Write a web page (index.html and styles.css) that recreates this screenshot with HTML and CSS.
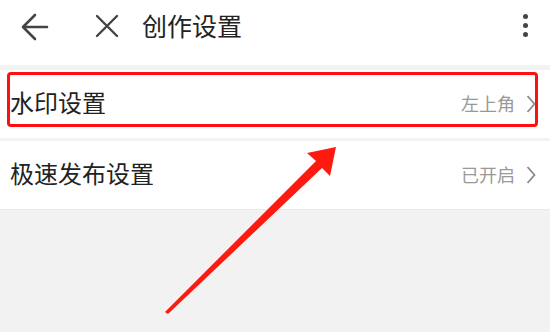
FILE: index.html
```html
<!DOCTYPE html>
<html lang="zh">
<head>
<meta charset="utf-8">
<link rel="stylesheet" href="styles.css">
</head>
<body>
<div class="page">
  <header class="topbar">
    <svg class="icon back" width="30" height="30" viewBox="0 0 30 30"><path d="M27 15H4M15 3L3 15L15 27" fill="none" stroke="#444" stroke-width="2.6" stroke-linecap="round" stroke-linejoin="round"/></svg>
    <svg class="icon close" width="26" height="26" viewBox="0 0 26 26"><path d="M3 3L23 23M23 3L3 23" fill="none" stroke="#444" stroke-width="2.4" stroke-linecap="round"/></svg>
    <h1 class="title">创作设置</h1>
    <div class="more"><span></span><span></span><span></span></div>
  </header>
  <div class="sep sep-top"></div>
  <div class="row">
    <span class="label">水印设置</span>
    <span class="value">左上角</span>
    <svg class="chev" width="10" height="20" viewBox="0 0 10 20"><path d="M1.5 2L8.5 10L1.5 18" fill="none" stroke="#8a8a8a" stroke-width="1.8"/></svg>
  </div>
  <div class="sep sep-mid"></div>
  <div class="row">
    <span class="label">极速发布设置</span>
    <span class="value">已开启</span>
    <svg class="chev" width="10" height="20" viewBox="0 0 10 20"><path d="M1.5 2L8.5 10L1.5 18" fill="none" stroke="#8a8a8a" stroke-width="1.8"/></svg>
  </div>
  <div class="rest"></div>
  <div class="highlight"></div>
  <svg class="arrow" width="550" height="332" viewBox="0 0 550 332"><path d="M165 312L168 314L322 168L330 176L336 147L307 153L316 161Z" fill="#ff1a0f"/></svg>
</div>
</body>
</html>
```
FILE: styles.css
```css
html, body {
  margin: 0;
  padding: 0;
}
body {
  width: 550px;
  height: 332px;
  overflow: hidden;
  background: #f2f2f2;
  font-family: "Noto Sans CJK SC", "Noto Sans", sans-serif;
}
.page {
  position: relative;
  width: 550px;
  height: 332px;
  display: flex;
  flex-direction: column;
}
.topbar {
  height: 52px;
  padding-bottom: 13px;
  background: #fff;
  display: flex;
  align-items: center;
  flex-shrink: 0;
}
.back {
  margin-left: 20px;
  margin-top: 2px;
}
.close {
  margin-left: 44px;
}
.title {
  margin: -3px 0 0 22px;
  font-size: 25px;
  font-weight: 400;
  color: #222;
  flex: 1;
}
.more {
  display: flex;
  flex-direction: column;
  gap: 4px;
  margin-right: 22px;
  margin-top: -2px;
}
.more span {
  width: 5px;
  height: 5px;
  border-radius: 50%;
  background: #444;
}
.sep {
  background: #f2f4f4;
  flex-shrink: 0;
}
.sep-top { height: 5px; }
.sep-mid { height: 3px; }
.row {
  height: 68px;
  background: #fff;
  display: flex;
  align-items: center;
  flex-shrink: 0;
}
.label {
  margin-left: 10px;
  margin-bottom: 6px;
  font-size: 24px;
  color: #222;
  flex: 1;
}
.value {
  font-size: 18px;
  color: #999;
  margin-right: 11px;
  margin-bottom: 2px;
}
.chev {
  margin-right: 14px;
}
.rest {
  flex: 1;
  background: #f2f2f2;
  border-top: 1px solid #eaeaea;
}
.highlight {
  position: absolute;
  left: 7px;
  top: 72px;
  width: 525px;
  height: 49px;
  border: 3px solid #ff1010;
  border-radius: 4px;
}
.arrow {
  position: absolute;
  left: 0;
  top: 0;
}
```
